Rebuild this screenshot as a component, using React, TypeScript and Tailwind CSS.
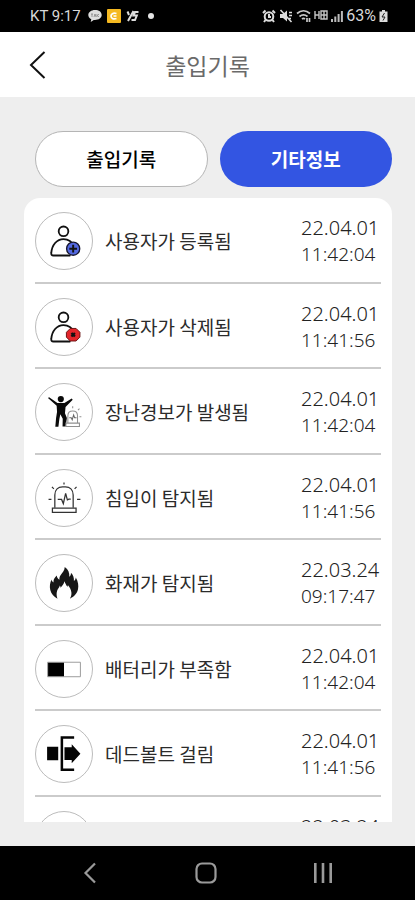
import type { ReactNode } from "react";

type LogEntry = {
  icon: ReactNode;
  label: string;
  date: string;
  time: string;
};

function Person({ children }: { children: ReactNode }) {
  return (
    <svg viewBox="0 0 58 58" className="size-full" fill="none" stroke="#111" strokeWidth="1.9" aria-hidden="true">
      <circle cx="28.5" cy="19" r="5" />
      <path d="M18 44c-1.600 0-2.400-1-2.200-2.600C16.500 33 21.500 27 28.500 27c5 0 9 3 11 7.500M18 44h17" strokeLinecap="round" />
      {children}
    </svg>
  );
}

const userAdded = (
  <Person>
    <circle cx="38.5" cy="37" r="6.8" fill="#5368e0" stroke="#15152e" strokeWidth="1.4" />
    <path d="M38.500 33v8M34.500 37h8" strokeWidth="2" />
  </Person>
);

const userRemoved = (
  <Person>
    <path d="M35.500 30.500h6l4 4v5l-4 4h-6l-4-4v-5z" fill="#e3262b" stroke="#6a1212" strokeWidth="1" />
    <path d="M36.700 35.200l3.600 3.600M40.300 35.200l-3.600 3.600" strokeWidth="2.400" />
  </Person>
);

const tamper = (
  <svg viewBox="0 0 58 58" className="size-full" fill="none" aria-hidden="true">
    <circle cx="25.7" cy="15.600" r="3.200" fill="#0a0a0a" />
    <path
      d="M12.400 14.500l1.200-.8 8.600 5.900h7.200l7.600-4.700 1 1.300-7.400 7.600-.6 6.500 2 5-1.300 8.800h-3.200l.2-8-2.500-4.800-1 5-1 8h-3.200l.8-9 1-6.500-.4-6.200z"
      fill="#0a0a0a"
    />
    <g stroke="#909090" strokeWidth="1.100">
      <path d="M33 40v-7c0-3 2-5 5-5s5 2 5 5v7M31 40.500h14v3.500H31zM38 25v-2M43.500 27l1.500-1.500M45 34h2" />
      <path d="M34.500 35h2l1 2 1.500-5 1 3h2" stroke="#666" />
    </g>
  </svg>
);

const siren = (
  <svg viewBox="0 0 58 58" className="size-full" fill="none" stroke="#333" strokeWidth="1.3" aria-hidden="true">
    <path d="M19.500 39V26c0-5.500 3.500-8.500 8-8.500h3c4.500 0 8 3 8 8.500v13" />
    <path d="M17 39.500h24.500V44H17z" />
    <path d="M22.500 30.500h4l1.800 4.300 2.400-10.600 1.800 6.800 1.500-.8h2" />
    <path d="M29 13v2M16.500 17.500l2 2M42 17.500l-2 2M13 30.500h3M42.500 30.500H46" />
  </svg>
);

const fire = (
  <svg viewBox="0 0 58 58" className="size-full" fill="#161616" aria-hidden="true">
    <path d="M29.800 12.300c-.2 3.800-2.500 5.800-4.200 8.300-1.300 2-1.500 3.300-1.300 5-1.600-.8-2.600-2.200-2.800-4.300-2.500 2.400-3.500 4-3.400 7.100-1.100-.5-1.800-1.500-2-2.900-1.600 3.500-2.200 7-1.300 10.800 1 4.200 3.600 6.800 7.500 8.900-1-2.500-1.300-5.200-.5-8 .6-2.200 2.400-3.500 2.900-5.700.5.700.7 1.400.7 2.400 1.900-1.900 3.500-3.800 4-6.600 1 2 1.600 4 3.200 5.700.4-.6.500-1.200.4-2 1.800 2.300 3.500 4.700 3.700 8 .1 2.400-.5 4.300-1.600 6.200 4.300-2 7.500-5 8.400-9.600.8-4 .3-8-2.300-12.400-.1 1.600-.7 2.800-1.900 3.700.2-3.600-.7-6-3.100-8.600.1 1.800-.4 3.200-1.700 4.300.3-4.300-1-7.800-4.700-10.300z" />
  </svg>
);

const battery = (
  <svg viewBox="0 0 58 58" className="size-full" fill="none" aria-hidden="true">
    <path d="M12 22h34v15H12z" stroke="#999" strokeWidth="1" />
    <path d="M12.500 22.500H29v14H12.500z" fill="#000" />
  </svg>
);

const deadbolt = (
  <svg viewBox="0 0 58 58" className="size-full" fill="#050505" aria-hidden="true">
    <path d="M11.500 21.500H23V35.500H11.500zM29.500 22H37v-3.200l9 9.900-9 9.800V35.300h-7.500z" />
    <path d="M39.500 12H26.800v33.300h12.700" fill="none" stroke="#050505" strokeWidth="2.600" />
  </svg>
);

const entries: LogEntry[] = [
  { icon: userAdded, label: "사용자가 등록됨", date: "22.04.01", time: "11:42:04" },
  { icon: userRemoved, label: "사용자가 삭제됨", date: "22.04.01", time: "11:41:56" },
  { icon: tamper, label: "장난경보가 발생됨", date: "22.04.01", time: "11:42:04" },
  { icon: siren, label: "침입이 탐지됨", date: "22.04.01", time: "11:41:56" },
  { icon: fire, label: "화재가 탐지됨", date: "22.03.24", time: "09:17:47" },
  { icon: battery, label: "배터리가 부족함", date: "22.04.01", time: "11:42:04" },
  { icon: deadbolt, label: "데드볼트 걸림", date: "22.04.01", time: "11:41:56" },
  { icon: null, label: "", date: "22.03.24", time: "" },
];

function StatusBar() {
  return (
    <div className="flex h-8 shrink-0 items-center justify-between bg-black pr-[27px] pl-[30px] font-['Roboto',sans-serif] text-[15px] leading-5 text-[#d8d8d8]">
      <div className="flex items-center gap-[5px]">
        <span className="mr-0.5">KT 9:17</span>
        <svg viewBox="0 0 14 14" className="size-3.5" aria-hidden="true">
          <path d="M7 1C3.200 1 .3 3.200.3 6c0 1.800 1.200 3.400 3 4.300L2.700 13l3.100-2.100c4.400.5 7.900-1.800 7.900-4.900S10.800 1 7 1z" fill="#ddd" />
          <path d="M3 5h2M4 5v3M6 8l1-3 1 3M9 5v3M11 5L9.500 6.500 11 8" stroke="#777" strokeWidth=".7" fill="none" />
        </svg>
        <svg viewBox="0 0 14 14" className="size-3.5" aria-hidden="true">
          <rect width="14" height="14" rx="1" fill="#f5b921" />
          <path d="M9.500 4.500C6 3.500 4 5 4 7s2 3.500 5.500 2.500M6.500 7h3" stroke="#fff" strokeWidth="1.700" fill="none" />
        </svg>
        <svg viewBox="0 0 13 14" className="h-3.5 w-[13px]" fill="none" stroke="#ddd" strokeWidth="2" aria-hidden="true">
          <path d="M1.500 2.500L3 6M7.500 2L2 12M12.500 3H9L7.500 6.500h3.300L9 11H5.500" />
        </svg>
        <span className="ml-1 size-1.5 rounded-full bg-[#e5e5e5]" />
      </div>
      <div className="flex items-center gap-[3px]">
        <svg viewBox="0 0 14 14" className="size-3.5" fill="none" stroke="#ddd" strokeWidth="2" aria-hidden="true">
          <circle cx="7" cy="7.500" r="4.300" />
          <path d="M7 5v3h2M1 4l2.500-2.500M13 4l-2.500-2.500M3.500 11L2 13M10.500 11l1.500 2" />
        </svg>
        <svg viewBox="0 0 14 14" className="size-3.5" aria-hidden="true">
          <path d="M1 5h3l4-3.500v11L4 9H1z" fill="#ddd" />
          <path d="M1.500 1l11 12M10 3.500h3M10 6.500h3M10 9.500h2" stroke="#ddd" strokeWidth="1.600" />
        </svg>
        <svg viewBox="0 0 15 14" className="h-3.5 w-[15px]" fill="none" stroke="#c8c8c8" strokeWidth="1.700" aria-hidden="true">
          <path d="M1 4.500c4-3.500 9-3.500 13 0M3.500 7.500c2.500-2 5.500-2 8 0M6 10c1-.8 2-.8 3 0M11 9v4M13.500 9v4" />
        </svg>
        <svg viewBox="0 0 14 12" className="h-3 w-3.5" fill="none" stroke="#c4c4c4" strokeWidth="1.400" aria-hidden="true">
          <path d="M1 1v8M1 5h4M5 1v8M7 1h6v8H7zM7 5h6M10 1v8" />
        </svg>
        <svg viewBox="0 0 12 12" className="size-3" fill="#bbb" aria-hidden="true">
          <path d="M0 9h2v3H0zM3.300 6.500h2V12h-2zM6.600 4h2v8h-2zM9.900 1h2v11h-2z" />
        </svg>
        <span className="text-base leading-5">63%</span>
        <svg viewBox="0 0 9 12" className="h-3 w-[9px]" aria-hidden="true">
          <path d="M3 0h3v1.500h2.500V12H.5V1.500H3z" fill="#ddd" />
          <path d="M5.500 3L3 7h3L4 10.500" stroke="#222" fill="none" />
        </svg>
      </div>
    </div>
  );
}

function LogRow({ entry }: { entry: LogEntry }) {
  return (
    <li className="flex shrink-0 items-center border-b-2 border-[#cbcbcb] pt-0.5 odd:h-[86px] even:h-[85px]">
      <div className="size-[58px] shrink-0 rounded-full border border-[#bcbcbc]">{entry.icon}</div>
      <p className="ml-3 min-w-0 flex-1 text-[19px] leading-7 text-[#2b2b2b]">{entry.label}</p>
      <div className="w-20 shrink-0 font-['Noto_Sans',sans-serif] font-light whitespace-nowrap text-[#222]">
        <p className="text-[20px] leading-[27px]">{entry.date}</p>
        <p className="h-[27px] text-[19px] leading-[27px]">{entry.time}</p>
      </div>
    </li>
  );
}

export default function App() {
  return (
    <div className="flex h-screen flex-col bg-[#eeeeee] font-['Noto_Sans_CJK_KR',sans-serif]">
      <StatusBar />
      <header className="grid h-[65px] shrink-0 grid-cols-[1fr_auto_1fr] items-center bg-white px-7">
        <button type="button" aria-label="뒤로" className="w-fit">
          <svg viewBox="0 0 18 28" className="h-7 w-[18px]" fill="none" stroke="#111" strokeWidth="2" aria-hidden="true">
            <path d="M16.500 1L3 14l13.500 13" />
          </svg>
        </button>
        <h1 className="text-[23px] leading-8 text-[#6a6a6a]">출입기록</h1>
      </header>

      <main className="flex min-h-0 flex-1 flex-col pr-[23px] pb-6 pl-6">
        <nav className="mt-[34px] grid shrink-0 grid-cols-2 gap-3 pl-[11px] text-[19px] leading-7">
          <button type="button" className="h-14 rounded-full border border-[#b5b5b5] bg-white font-medium text-black">
            출입기록
          </button>
          <button type="button" className="h-14 rounded-full bg-[#3355e2] font-bold text-white">
            기타정보
          </button>
        </nav>
        <ul className="mt-[11px] flex min-h-0 flex-1 flex-col overflow-y-auto rounded-t-2xl bg-white px-[11px] [scrollbar-width:none]">
          {entries.map((entry, i) => (
            <LogRow key={i} entry={entry} />
          ))}
        </ul>
      </main>

      <footer className="grid h-[54px] shrink-0 grid-cols-3 items-center bg-black pr-[34px] pl-8 text-[#9a9a9a]">
        <button type="button" aria-label="이전" className="justify-self-center">
          <svg viewBox="0 0 14 22" className="h-[22px] w-3.5" fill="none" stroke="currentColor" strokeWidth="2.200" aria-hidden="true">
            <path d="M12 1.500L2.500 11l9.500 9.500" />
          </svg>
        </button>
        <button type="button" aria-label="홈" className="justify-self-center">
          <svg viewBox="0 0 22 22" className="size-[22px]" fill="none" stroke="currentColor" strokeWidth="2.200" aria-hidden="true">
            <rect x="1.500" y="1.500" width="19" height="19" rx="5.500" />
          </svg>
        </button>
        <button type="button" aria-label="최근 앱" className="justify-self-center">
          <svg viewBox="0 0 20 20" className="size-5" stroke="currentColor" strokeWidth="2.600" aria-hidden="true">
            <path d="M2.300 0v20M10 0v20M17.700 0v20" />
          </svg>
        </button>
      </footer>
    </div>
  );
}
